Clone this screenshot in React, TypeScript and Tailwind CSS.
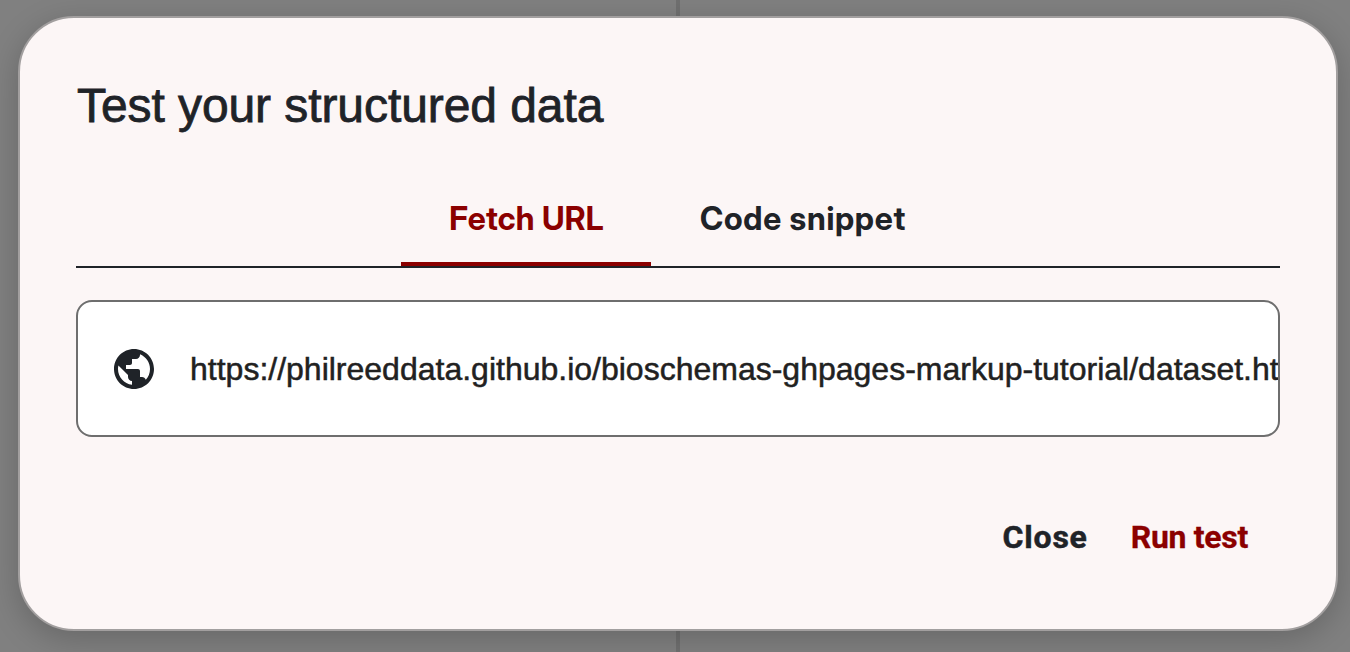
import { MdPublic } from "react-icons/md";

export default function App() {
  return (
    <div className="flex h-[652px] w-[1350px] justify-center overflow-hidden bg-[linear-gradient(90deg,#808080_676px,#707070_676px,#707070_680px,#808080_680px)] pl-1.5 pt-4 font-['Liberation_Sans',sans-serif] text-[#1f2328]">
      <main
        role="dialog"
        className="flex h-[615px] w-[1320px] shrink-0 flex-col rounded-[56px] border-2 border-[#a29f9f] bg-[#fcf6f6] px-14 pt-[58px] shadow-[0_8px_32px_rgba(0,0,0,0.2)]"
      >
        <h1 className="h-[60px] whitespace-nowrap pl-px text-[48px] leading-[60px] tracking-[-0.08px] [-webkit-text-stroke:0.8px_#1f2328]">Test your structured data</h1>
        <div role="tablist" className="mt-[34px] flex h-[98px] justify-center border-b-2 border-[#1f2328] font-['Inter_Display','Inter',sans-serif] text-[32px] font-bold leading-[98px]">
          <button className="h-[96px] w-[250px] whitespace-nowrap border-b-4 border-[#8b0000] text-[#8b0000]">
            <span className="block h-[92px] pl-px tracking-[0.25px]">Fetch URL</span>
          </button>
          <button className="h-[96px] w-[304px] whitespace-nowrap tracking-[0.75px]">Code snippet</button>
        </div>
        <div className="mt-8 flex h-[137px] items-center overflow-hidden rounded-2xl border-2 border-[#6e6e6e] bg-white pl-8">
          <MdPublic className="size-12 shrink-0" />
          <span className="ml-8 whitespace-nowrap text-[32px] leading-[40px] text-[#212121] [-webkit-text-stroke:0.5px_#212121]">
            https://philreeddata.github.io/bioschemas-ghpages-markup-tutorial/dataset.html
          </span>
        </div>
        <div className="mt-[80px] flex h-10 justify-end gap-[43px] pr-8 font-['Roboto',sans-serif] text-[32px] font-bold leading-[40px]">
          <button className="whitespace-nowrap tracking-[0.8px] [-webkit-text-stroke:0.5px_#1f2328]">Close</button>
          <button className="whitespace-nowrap tracking-[-0.3px] text-[#8b0000] [-webkit-text-stroke:0.3px_#8b0000]">Run test</button>
        </div>
      </main>
    </div>
  );
}
